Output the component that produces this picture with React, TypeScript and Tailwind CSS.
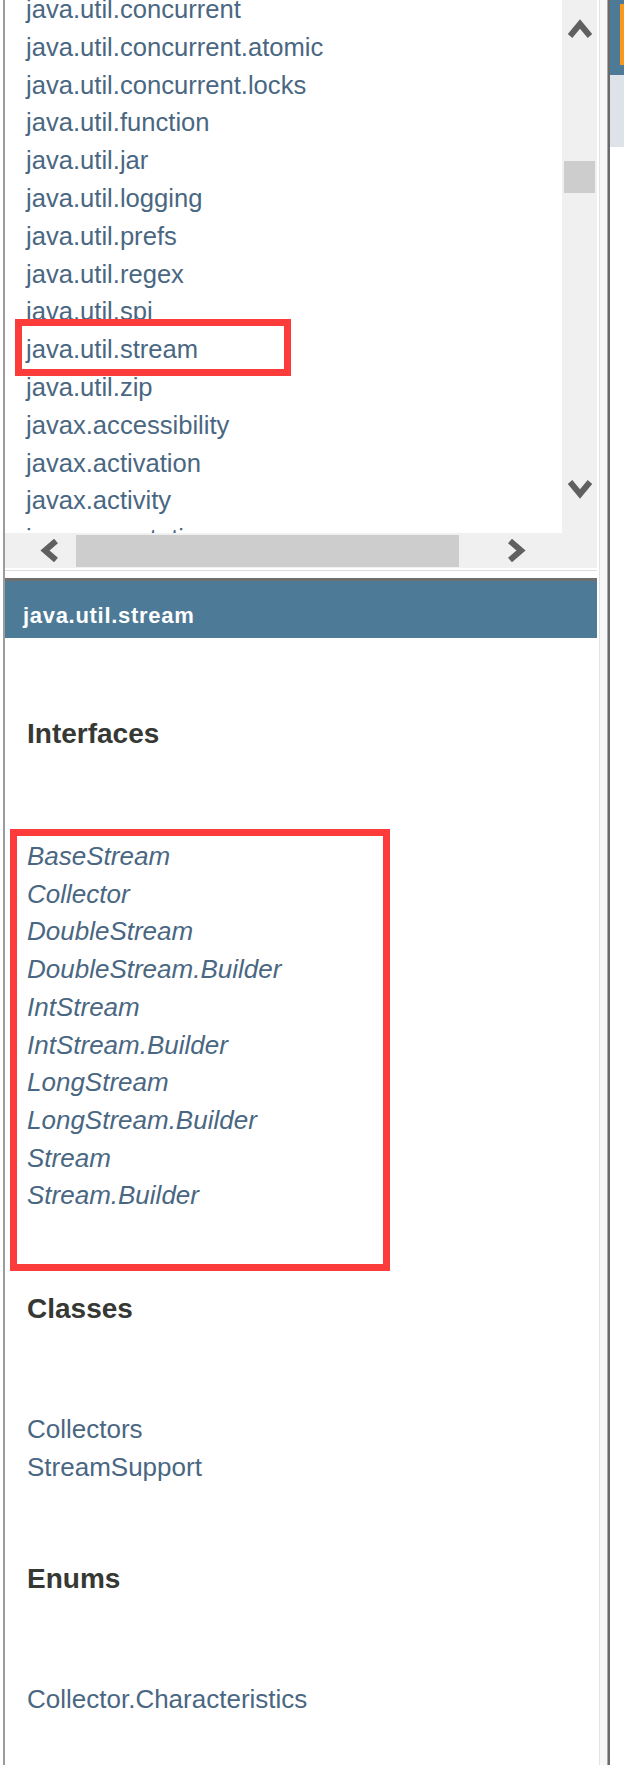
import React from "react";

const pkgs = [
  "java.util.concurrent",
  "java.util.concurrent.atomic",
  "java.util.concurrent.locks",
  "java.util.function",
  "java.util.jar",
  "java.util.logging",
  "java.util.prefs",
  "java.util.regex",
  "java.util.spi",
  "java.util.stream",
  "java.util.zip",
  "javax.accessibility",
  "javax.activation",
  "javax.activity",
  "javax.annotation",
];

const interfaces = [
  "BaseStream",
  "Collector",
  "DoubleStream",
  "DoubleStream.Builder",
  "IntStream",
  "IntStream.Builder",
  "LongStream",
  "LongStream.Builder",
  "Stream",
  "Stream.Builder",
];

function Chevron({ dir }: { dir: "up" | "down" | "left" | "right" }) {
  if (dir === "up" || dir === "down") {
    const pts = dir === "up" ? "2,17 12,5 22,17" : "2,3 12,15 22,3";
    return (
      <svg width="24" height="20" viewBox="0 0 24 20">
        <polyline points={pts} fill="none" stroke="#606060" strokeWidth="6" strokeLinejoin="miter" />
      </svg>
    );
  }
  const pts = dir === "left" ? "16,2 5,11.5 16,21" : "4,2 15,11.5 4,21";
  return (
    <svg width="20" height="23" viewBox="0 0 20 23">
      <polyline points={pts} fill="none" stroke="#606060" strokeWidth="6" strokeLinejoin="miter" />
    </svg>
  );
}

export default function App() {
  return (
    <div className="relative w-[624px] h-[1765px] bg-white flex overflow-hidden font-['Liberation_Sans',Arial,sans-serif]">
      <div className="w-[3px] shrink-0" />
      <div className="w-[2px] shrink-0 bg-[#9c9c9c]" />

      {/* frames column */}
      <div className="w-[592px] shrink-0 flex flex-col">
        {/* package list frame */}
        <div className="h-[578px] flex flex-col">
          <div className="h-[533px] flex">
            <div className="w-[557px] h-[533px] overflow-hidden bg-white">
              <ul className="-mt-[9px] pl-[21px]">
                {pkgs.map((p) => (
                  <li key={p} className="text-[25.6px] leading-[37.8px] text-[#4a6782] whitespace-nowrap">
                    {p}
                  </li>
                ))}
              </ul>
            </div>
            <div className="w-[35px] bg-[#f0f0f0] flex flex-col items-center">
              <div className="mt-[19px] h-[20px]">
                <Chevron dir="up" />
              </div>
              <div className="mt-[122px] w-[31px] h-[32px] bg-[#cdcdcd]" />
              <div className="mt-[286px] h-[20px]">
                <Chevron dir="down" />
              </div>
            </div>
          </div>
          <div className="h-[35px] bg-[#f0f0f0] flex items-center">
            <div className="ml-[35px] w-[20px] h-[23px]">
              <Chevron dir="left" />
            </div>
            <div className="ml-[16px] w-[383px] h-[32px] bg-[#cdcdcd]" />
            <div className="ml-[47px] w-[20px] h-[23px]">
              <Chevron dir="right" />
            </div>
          </div>
          <div className="h-[2px] bg-white" />
          <div className="h-[1px] bg-[#dcdcdc]" />
          <div className="flex-1 bg-white" />
        </div>

        {/* class list frame */}
        <div className="flex-1 border-t-[3px] border-[#6f6f6f] bg-white">
          <div className="h-[57px] bg-[#4d7a97] pl-[18px] pt-[23px]">
            <div className="text-[22px] leading-[24px] font-bold tracking-[0.7px] text-white whitespace-nowrap">
              java.util.stream
            </div>
          </div>
          <div className="pl-[22px]">
            <h2 className="mt-[80px] text-[28px] leading-[32px] font-bold text-[#353833]">Interfaces</h2>
            <ul className="mt-[88px]">
              {interfaces.map((i) => (
                <li key={i} className="text-[26px] leading-[37.7px] italic text-[#4a6782] whitespace-nowrap">
                  {i}
                </li>
              ))}
            </ul>
            <h2 className="mt-[78px] text-[28px] leading-[32px] font-bold text-[#353833]">Classes</h2>
            <ul className="mt-[86px]">
              {["Collectors", "StreamSupport"].map((i) => (
                <li key={i} className="text-[26px] leading-[37.7px] text-[#4a6782] whitespace-nowrap">
                  {i}
                </li>
              ))}
            </ul>
            <h2 className="mt-[77px] text-[28px] leading-[32px] font-bold text-[#353833]">Enums</h2>
            <ul className="mt-[86px]">
              <li className="text-[26px] leading-[37.7px] text-[#4a6782] whitespace-nowrap">
                Collector.Characteristics
              </li>
            </ul>
          </div>
        </div>
      </div>

      {/* frame separators */}
      <div className="w-[13px] shrink-0 flex">
        <div className="w-[2px] bg-white" />
        <div className="w-[1px] bg-[#e3e3e3]" />
        <div className="w-[7px] bg-[#f7f7f7]" />
        <div className="w-[1px] bg-[#a8a8a8]" />
        <div className="w-[2px] bg-[#6a6a6a]" />
      </div>

      {/* right frame (partially visible) */}
      <div className="w-[14px] shrink-0 flex flex-col">
        <div className="h-[75px] bg-[#4d7a97] flex justify-end pt-[4px]">
          <div className="w-[4px] h-[61px] bg-[#f8981d]" />
        </div>
        <div className="h-[72px] bg-[#dee3e9]" />
        <div className="flex-1 bg-white" />
      </div>

      {/* annotation boxes */}
      <div className="absolute left-[15px] top-[319px] w-[276px] h-[57px] border-[7px] border-[#fc3b3b]" />
      <div className="absolute left-[10px] top-[829px] w-[380px] h-[442px] border-[7px] border-[#fc3b3b]" />
    </div>
  );
}
